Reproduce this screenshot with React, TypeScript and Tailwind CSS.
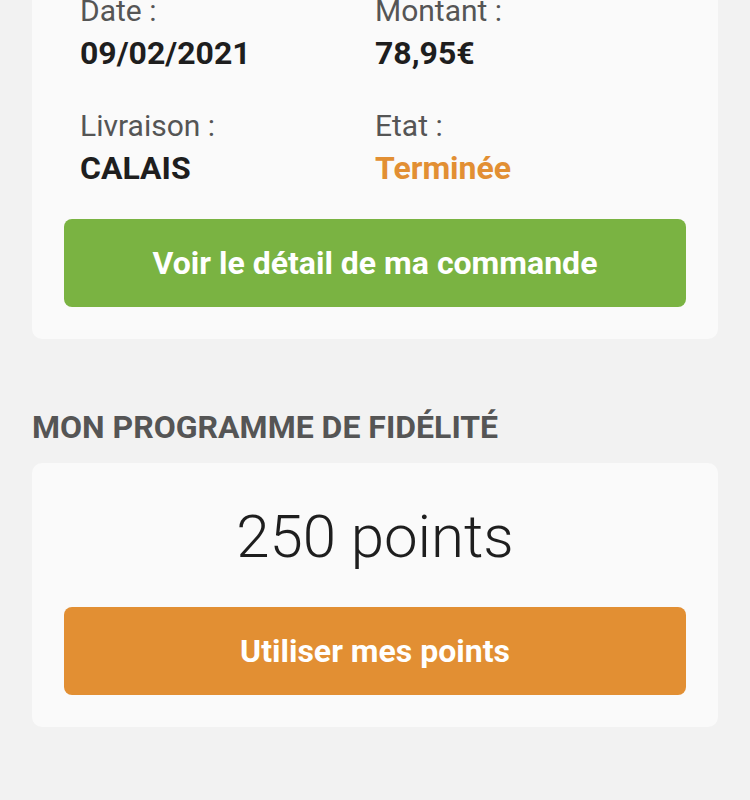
const font = { fontFamily: "Roboto, 'Liberation Sans', sans-serif" };

function InfoCell({ label, value, valueClass = "text-[#1e1e1e]" }: { label: string; value: string; valueClass?: string }) {
  return (
    <div>
      <p className="text-[30px] leading-[42px] text-[#555555]">{label}</p>
      <p className={`text-[32px] font-bold leading-[42px] ${valueClass}`}>{value}</p>
    </div>
  );
}

export default function App() {
  return (
    <div className="h-[800px] overflow-hidden bg-[#f2f2f2] px-8" style={font}>
      <section className="-mt-[40px] rounded-[10px] bg-[#fafafa] px-8 pb-8 pt-[30px]">
        <div className="grid grid-cols-2 gap-y-[31px] px-4">
          <InfoCell label="Date :" value="09/02/2021" />
          <InfoCell label="Montant :" value="78,95€" />
          <InfoCell label="Livraison :" value="CALAIS" />
          <InfoCell label="Etat :" value="Terminée" valueClass="text-[#e28f33]" />
        </div>
        <button className="mt-[30px] flex h-[88px] w-full items-center justify-center rounded-[8px] bg-[#7ab342] text-[32px] font-bold text-white">
          Voir le détail de ma commande
        </button>
      </section>

      <h2 className="mt-[67px] text-[32px] font-bold uppercase leading-[42px] text-[#555555]">
        Mon programme de fidélité
      </h2>

      <section className="mt-[15px] rounded-[10px] bg-[#fafafa] px-8 pb-8 pt-[38px]">
        <p className="text-center text-[60px] font-light leading-[72px] text-[#1e1e1e]">250 points</p>
        <button className="mt-[34px] flex h-[88px] w-full items-center justify-center rounded-[8px] bg-[#e28f33] text-[32px] font-bold text-white">
          Utiliser mes points
        </button>
      </section>
    </div>
  );
}
